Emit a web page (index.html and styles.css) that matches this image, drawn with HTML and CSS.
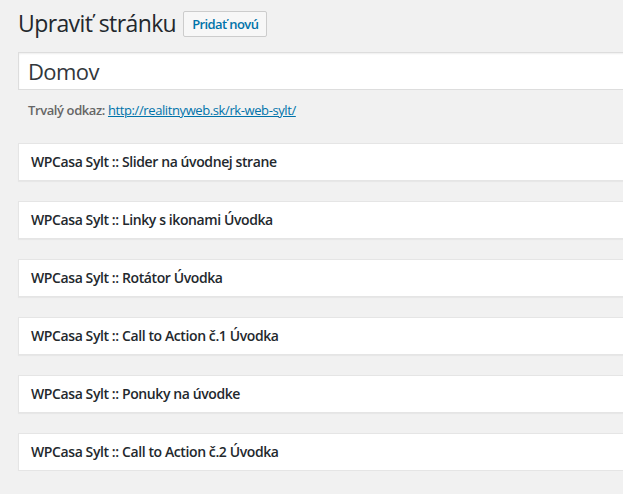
FILE: index.html
```html
<!DOCTYPE html>
<html lang="sk">
<head>
<meta charset="utf-8">
<title>Upraviť stránku</title>
<link rel="stylesheet" href="styles.css">
</head>
<body>
<div class="wrap">
  <div class="title-row">
    <h1 class="page-title">Upraviť stránku</h1>
    <a class="page-title-action" href="#">Pridať novú</a>
  </div>
  <div class="poststuff">
    <div class="titlewrap">
      <input class="title-input" type="text" value="Domov">
    </div>
    <div class="slug-box">
      <strong>Trvalý odkaz:</strong> <a href="#">http://realitnyweb.sk/rk-web-sylt/</a>
    </div>
    <div class="boxes">
      <div class="postbox"><h2 class="hndle">WPCasa Sylt :: Slider na úvodnej strane</h2></div>
      <div class="postbox"><h2 class="hndle">WPCasa Sylt :: Linky s ikonami Úvodka</h2></div>
      <div class="postbox"><h2 class="hndle">WPCasa Sylt :: Rotátor Úvodka</h2></div>
      <div class="postbox"><h2 class="hndle">WPCasa Sylt :: Call to Action č.1 Úvodka</h2></div>
      <div class="postbox"><h2 class="hndle">WPCasa Sylt :: Ponuky na úvodke</h2></div>
      <div class="postbox"><h2 class="hndle">WPCasa Sylt :: Call to Action č.2 Úvodka</h2></div>
    </div>
  </div>
</div>
</body>
</html>
```
FILE: styles.css
```css
html, body {
  margin: 0;
  padding: 0;
  background: #f1f1f1;
  overflow: hidden;
}
body {
  font-family: "Open Sans", "Noto Sans", sans-serif;
  color: #444;
  font-size: 13px;
}
.wrap {
  padding-left: 18px;
  width: 700px;
}
.title-row {
  display: flex;
  align-items: center;
  gap: 7px;
  padding: 9px 0 4px;
  height: 29px;
}
.page-title {
  margin: 0;
  font-size: 23px;
  font-weight: 400;
  line-height: 29px;
  letter-spacing: -0.6px;
  word-spacing: 1px;
  color: #23282d;
}
.page-title-action {
  display: inline-block;
  box-sizing: border-box;
  height: 26px;
  line-height: 24px;
  padding: 0 8px;
  border: 1px solid #ccc;
  border-radius: 2px;
  background: #f7f7f7;
  color: #0073aa;
  font-size: 13px;
  font-weight: 600;
  letter-spacing: -0.6px;
  text-decoration: none;
}
.poststuff {
  padding-top: 10px;
}
.title-input {
  display: block;
  box-sizing: border-box;
  width: 100%;
  height: 38px;
  margin: 0 0 3px;
  padding: 0 9px;
  border: 1px solid #ddd;
  box-shadow: inset 0 1px 2px rgba(0,0,0,.07);
  background: #fff;
  font-family: inherit;
  font-size: 22px;
  letter-spacing: -0.6px;
  color: #32373c;
  outline: none;
}
.slug-box {
  margin-top: 8px;
  height: 25px;
  line-height: 24px;
  padding: 0 10px;
  color: #666;
  font-size: 13px;
  letter-spacing: -0.4px;
}
.slug-box strong {
  font-weight: 600;
}
.slug-box a {
  color: #0073aa;
}
.boxes {
  padding-top: 20px;
  display: flex;
  flex-direction: column;
  gap: 20px;
}
.postbox {
  background: #fff;
  border: 1px solid #e5e5e5;
  box-shadow: 0 1px 1px rgba(0,0,0,.04);
}
.hndle {
  margin: 0;
  padding: 8px 12px;
  font-size: 14px;
  line-height: 20px;
  font-weight: 600;
  letter-spacing: -0.4px;
  color: #23282d;
}
```
